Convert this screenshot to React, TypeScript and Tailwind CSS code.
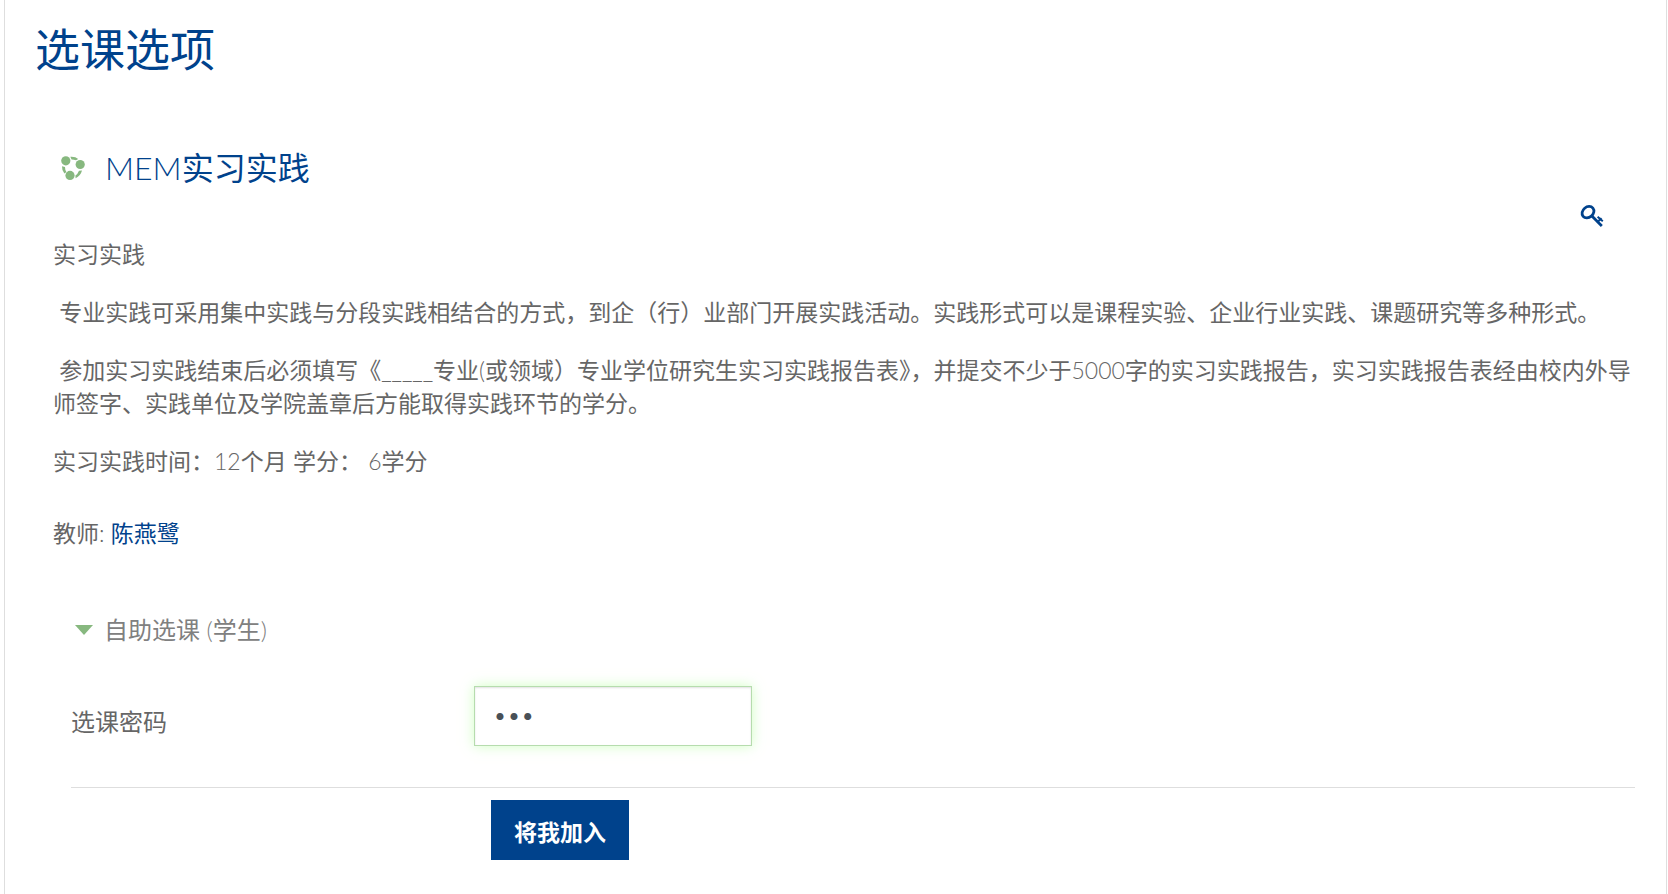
import React, { useState } from 'react';

interface CourseSummaryProps {
    paragraphs: string[];
    teacher: string;
}

const paragraphs = [
    '实习实践',
    '\u00a0专业实践可采用集中实践与分段实践相结合的方式，到企（行）业部门开展实践活动。实践形式可以是课程实验、企业行业实践、课题研究等多种形式。',
    '\u00a0参加实习实践结束后必须填写《_____专业(或领域）专业学位研究生实习实践报告表》，并提交不少于5000字的实习实践报告，实习实践报告表经由校内外导师签字、实践单位及学院盖章后方能取得实践环节的学分。',
    '实习实践时间：12个月 学分： 6学分',
];

const CourseIcon: React.FC = () => (
    <svg viewBox="0 0 24 24" className="h-6 w-6 shrink-0 text-[#87b87f]" aria-hidden="true">
        <circle cx="4.8" cy="4.8" r="4.6" fill="currentColor" />
        <circle cx="19.2" cy="8.5" r="4.6" fill="currentColor" />
        <circle cx="9" cy="19.4" r="4.6" fill="currentColor" />
        <g fill="currentColor">
            <path d="M9.3 0.8Q14.5 0.4 17.2 3.1L15 4.2Q12.8 3.8 10.6 3.6Z" />
            <path d="M1 10.2L4 11Q4 14 5.4 16L3.4 17.6Q0.8 14.5 1 10.2Z" />
            <path d="M14.6 22.3L14.4 19.6Q16.8 18 18 14.8L21 14.6Q19.6 20 14.6 22.3Z" />
        </g>
    </svg>
);

const KeyIcon: React.FC = () => (
    <svg viewBox="0 0 24 24" className="h-6 w-6 text-[#00428c]" role="img" aria-label="选课密码">
        <g fill="none" stroke="currentColor" strokeWidth="2.8">
            <ellipse cx="8" cy="8.2" rx="6.4" ry="5.2" transform="rotate(-40 8 8.2)" />
            <path d="M11.4 11.6L21.8 22" />
            <path d="M18 17.6L21.6 14.2M17.6 12.8L22.8 17.2" strokeWidth="2" />
        </g>
    </svg>
);

const CourseSummary: React.FC<CourseSummaryProps> = ({ paragraphs, teacher }) => (
    <div className="mt-[10px] pr-2 text-[23px] leading-[33px]">
        {paragraphs.map((text) => (
            <p key={text} className="mb-[25px]">
                {text}
            </p>
        ))}
        <p className="mt-[39px]">
            教师:{' '}
            <a href="#teacher" className="text-[#00428c]">
                {teacher}
            </a>
        </p>
    </div>
);

const EnrolForm: React.FC = () => {
    const [password, setPassword] = useState('123');
    const [open, setOpen] = useState(true);

    return (
        <form className="mt-[62px] ml-[18px] mr-[15px] text-2xl" onSubmit={(e) => e.preventDefault()}>
            <button
                type="button"
                aria-expanded={open}
                onClick={() => setOpen(!open)}
                className="flex items-center gap-[11px] pl-1 leading-9 text-[#808080]"
            >
                <svg viewBox="0 0 18 10" className="h-[10px] w-[18px] text-[#87b87f]" aria-hidden="true">
                    <path d="M0 0H18L9 10Z" fill="currentColor" />
                </svg>
                自助选课 (学生)
            </button>

            {open && (
                <div className="mt-[38px] flex items-start border-b border-[#dedede] pb-[41px]">
                    <label htmlFor="password" className="w-[403px] pt-[18px] leading-9">
                        选课密码
                    </label>
                    <input
                        id="password"
                        type="password"
                        value={password}
                        onChange={(e) => setPassword(e.target.value)}
                        className="h-[60px] w-[278px] border border-[#b6dcae] bg-white px-[18px] pb-1 text-[#495057]
                            outline-none shadow-[inset_0_1px_2px_rgba(0,0,0,0.12),0_0_12px_rgba(190,255,170,0.7)]"
                    />
                </div>
            )}

            <button
                type="submit"
                className="mt-3 ml-[420px] h-[60px] bg-[#00428c] px-[23px] pt-1 text-[23px] font-bold text-white"
            >
                将我加入
            </button>
        </form>
    );
};

export default function App() {
    return (
        <main
            className="ml-1 mr-px min-h-screen border-x border-[#dedede] bg-white pr-4 pl-[30px] font-normal text-[#666]
                font-['Lato_Light','Lato','Noto_Sans_CJK_SC',sans-serif]"
        >
            <h2 className="pt-[18px] text-[45px] leading-[64px] text-[#00428c]">选课选项</h2>

            <section className="mt-[62px] pl-[18px]">
                <h3 className="flex items-center gap-5 pl-2 text-[32px] leading-12 text-[#00428c]">
                    <CourseIcon />
                    <a href="#course">MEM实习实践</a>
                </h3>
                <div className="mt-3 flex justify-end pr-[46px]">
                    <KeyIcon />
                </div>
                <CourseSummary paragraphs={paragraphs} teacher="陈燕鹭" />
                <EnrolForm />
            </section>
        </main>
    );
}
